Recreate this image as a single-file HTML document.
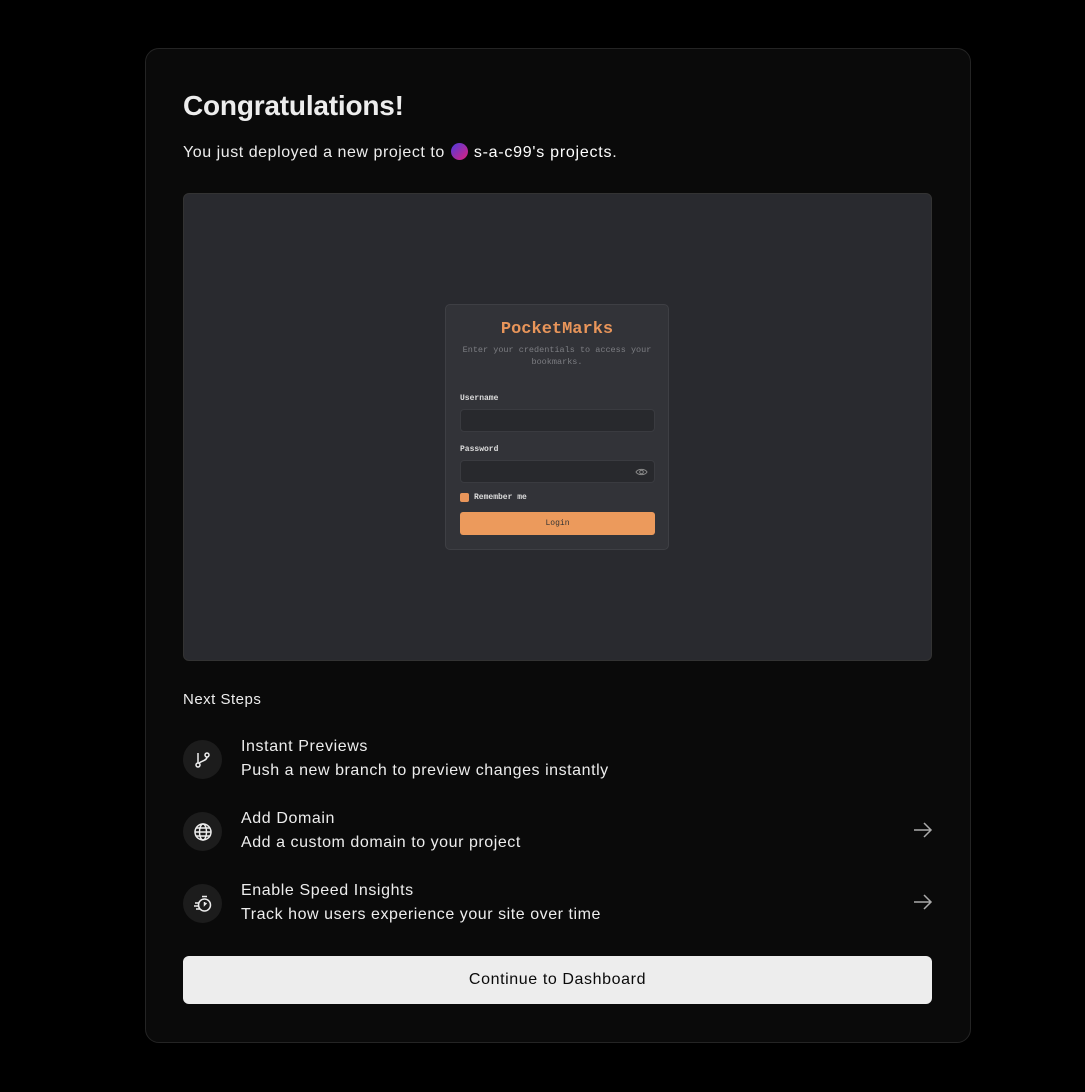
<!DOCTYPE html>
<html><head><style>
*{box-sizing:border-box;margin:0;padding:0}
body{width:1085px;height:1092px;background:#000;font-family:"Liberation Sans",sans-serif;color:#ededed;position:relative;overflow:hidden}
.card{position:absolute;left:145px;top:48px;width:826px;height:995px;background:#0a0a0a;border:1px solid #242424;border-radius:14px}
h1{position:absolute;left:183px;top:90px;font-size:28px;font-weight:bold;letter-spacing:-0.2px;color:#ededed}
.sub{position:absolute;left:183px;top:143px;font-size:16px;color:#ededed;letter-spacing:0.55px}
.sub b{font-weight:normal;letter-spacing:0.75px;color:#fff}
.dot{display:inline-block;width:17px;height:17px;border-radius:50%;background:linear-gradient(135deg,#4a3be0,#e0207a);vertical-align:-3px;margin:0 1px}
.prev{position:absolute;left:183px;top:193px;width:749px;height:468px;background:#292a2f;border:1px solid #333;border-radius:6px}
.login{position:absolute;left:445px;top:304px;width:224px;height:246px;background:#323338;border:1px solid #3e3f44;border-radius:5px;font-family:"Liberation Mono",monospace}
.login .t{position:absolute;top:15px;width:100%;text-align:center;color:#e8955a;font-size:17px;font-weight:bold}
.login .d{position:absolute;top:39px;width:100%;text-align:center;color:#7c7d82;font-size:8.5px;line-height:12px}
.lab{position:absolute;left:14px;font-size:8px;font-weight:bold;color:#ddd}
.inp{position:absolute;left:14px;width:195px;height:23px;background:#28292d;border:1px solid #3a3b40;border-radius:4px}
.btn{position:absolute;left:14px;top:207px;width:195px;height:23px;background:#ec9a5c;border-radius:3px;text-align:center;font-size:8px;line-height:23px;color:#333}
.ns{position:absolute;left:183px;top:691px;font-size:15px;color:#ededed;letter-spacing:0.5px}
.item{position:absolute;left:183px;width:750px;height:50px}
.ic{position:absolute;left:0;top:0;width:39px;height:39px;border-radius:50%;background:#1c1c1c;display:flex;align-items:center;justify-content:center}
.it{position:absolute;left:58px;top:-2px;font-size:16px;color:#ededed;letter-spacing:0.6px}
.id{position:absolute;left:58px;top:22px;font-size:16px;color:#ededed;letter-spacing:0.55px}
.ar{position:absolute;right:0;top:10px}
.cont{position:absolute;left:183px;top:956px;width:749px;height:48px;background:#ededed;border-radius:6px;color:#0a0a0a;font-size:16px;letter-spacing:0.6px;text-align:center;line-height:48px}
</style></head><body>
<div class="card"></div>
<h1>Congratulations!</h1>
<div class="sub">You just deployed a new project to <span class="dot"></span> <b>s-a-c99's projects</b>.</div>
<div class="prev"></div>
<div class="login">
<div class="t">PocketMarks</div>
<div class="d">Enter your credentials to access your<br>bookmarks.</div>
<div class="lab" style="top:89px">Username</div>
<div class="inp" style="top:104px"></div>
<div class="lab" style="top:140px">Password</div>
<div class="inp" style="top:155px"><svg style="position:absolute;right:6px;top:6px" width="13" height="10" viewBox="0 0 13 10"><path d="M1 5C3 1.5 10 1.5 12 5C10 8.5 3 8.5 1 5Z" fill="none" stroke="#888" stroke-width="1"/><circle cx="6.5" cy="5" r="1.8" fill="none" stroke="#888"/></svg></div>
<div style="position:absolute;left:14px;top:188px;width:9px;height:9px;background:#e8955a;border-radius:2px"></div>
<div class="lab" style="top:188px;left:28px">Remember me</div>
<div class="btn">Login</div>
</div>
<div class="ns">Next Steps</div>
<div class="item" style="top:740px"><div class="ic"><svg width="18" height="18" viewBox="0 0 18 18" fill="none" stroke="#ededed" stroke-width="1.5"><circle cx="4" cy="14" r="2"/><circle cx="13" cy="4" r="2"/><path d="M4 2v10M13 6c0 4-7 4-8 6.5"/></svg></div><div class="it">Instant Previews</div><div class="id">Push a new branch to preview changes instantly</div></div>
<div class="item" style="top:812px"><div class="ic"><svg width="20" height="20" viewBox="0 0 20 20" fill="none" stroke="#ededed" stroke-width="1.5"><circle cx="10" cy="10" r="8"/><ellipse cx="10" cy="10" rx="3.5" ry="8"/><path d="M2 10h16M3.5 6h13M3.5 14h13"/></svg></div><div class="it">Add Domain</div><div class="id">Add a custom domain to your project</div><svg class="ar" width="20" height="16" viewBox="0 0 20 16" fill="none" stroke="#aaa" stroke-width="1.5"><path d="M1 8h17M11 1l7 7-7 7"/></svg></div>
<div class="item" style="top:884px"><div class="ic"><svg width="20" height="20" viewBox="0 0 20 20" fill="none" stroke="#ededed" stroke-width="1.5"><circle cx="11.5" cy="11" r="6"/><path d="M9 2.5h5M11.5 8v3l2-2M2 9h4M1 12h4M3 15h4"/></svg></div><div class="it">Enable Speed Insights</div><div class="id">Track how users experience your site over time</div><svg class="ar" width="20" height="16" viewBox="0 0 20 16" fill="none" stroke="#aaa" stroke-width="1.5"><path d="M1 8h17M11 1l7 7-7 7"/></svg></div>
<div class="cont">Continue to Dashboard</div>
</body></html>
